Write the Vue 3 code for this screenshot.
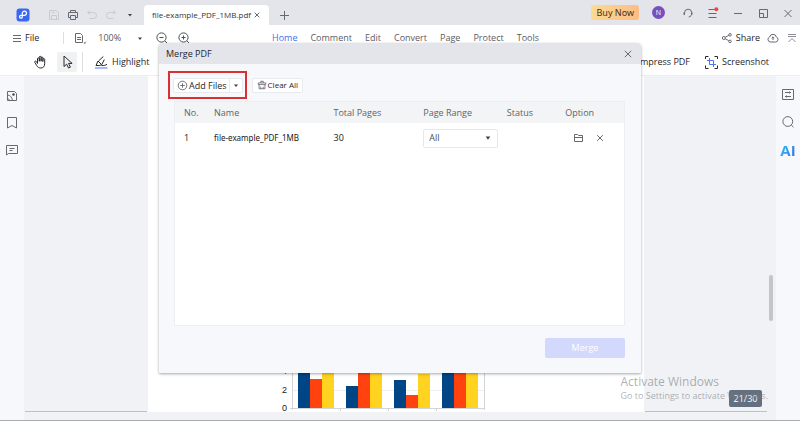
<script setup>
import { ref } from 'vue'

const menus = ['Home', 'Comment', 'Edit', 'Convert', 'Page', 'Protect', 'Tools']
const files = ref([{ name: 'file-example_PDF_1MB', pages: 30, range: 'All' }])
const zoom = ref('100%')
const bars = [
  [298, 366, 'a'], [310, 379, 'b'], [322, 366, 'c'],
  [346, 386, 'a'], [358, 366, 'b'], [370, 366, 'c'],
  [394, 380, 'a'], [406, 395, 'b'], [418, 374, 'c'],
  [442, 366, 'a'], [454, 366, 'b'], [466, 366, 'c'],
]
</script>

<template>
  <div class="app">
    <header class="titlebar">
      <svg class="logo" viewBox="0 0 14 14">
        <rect x="0.5" y="0.5" width="13" height="13" rx="3" fill="#3a66f2" stroke="none" />
        <path d="M6.300 8.900V5.300a2.100 2.100 0 1 1 2.100 2.100H4.900a1.400 1.400 0 1 0 1.400 1.500" fill="none" stroke="#fff" stroke-width="1.200" stroke-linecap="round" />
      </svg>
      <div class="quick">
        <button class="ic faint" aria-label="Save"><svg viewBox="0 0 12 12"><path d="M1.500 1.500h6.500l2.500 2.500v6.500h-9zM3.500 10.500v-4h5v4M3.500 3.500h3" /></svg></button>
        <button class="ic" aria-label="Print"><svg viewBox="0 0 12 12"><path d="M3.500 3.500v-2h5v2M3.500 8.500h-2v-5h9v5h-2M3.500 6.500h5v4h-5z" /></svg></button>
        <button class="ic faint" aria-label="Undo"><svg viewBox="0 0 12 12"><path d="M4 1.500l-2.500 2 2.500 2M1.500 3.500h6a3 3 0 0 1 0 6h-4" /></svg></button>
        <button class="ic faint" aria-label="Redo"><svg viewBox="0 0 12 12"><path d="M8 1.500l2.500 2-2.500 2M10.500 3.500h-6a3 3 0 0 0 0 6h4" /></svg></button>
        <button class="ic" aria-label="More"><svg viewBox="0 0 12 12"><path class="solid" d="M4 5h4l-2 2.500z" /></svg></button>
      </div>
      <div class="tab">
        <span>file-example_PDF_1MB.pdf</span>
        <button class="ic" aria-label="Close tab"><svg viewBox="0 0 12 12"><path d="M3.700 3.700l4.600 4.600M8.300 3.700l-4.600 4.600" /></svg></button>
      </div>
      <button class="ic plus" aria-label="New tab"><svg viewBox="0 0 12 12"><path d="M6.500 2v9M2 6.500h9" /></svg></button>
      <div class="winctl">
        <button class="buy">Buy Now</button>
        <span class="avatar">N</span>
        <div class="controls">
          <button class="ic" aria-label="Support"><svg viewBox="0 0 12 12"><path d="M2.500 7.800v-2a3.600 3.600 0 0 1 7.200 0c0 2.600-.8 3.700-3 4.200" /><path d="M2.200 5.500v2.300M9.800 5.500v2" stroke-width="1.500" /></svg></button>
          <button class="ic" aria-label="Menu"><svg viewBox="0 0 12 12"><path d="M1.500 2.500h6M1.500 6.500h8M1.500 10.500h8" /><circle cx="9.300" cy="2.300" r="2" fill="#f04444" stroke="none" /></svg></button>
          <button class="ic" aria-label="Minimise"><svg viewBox="0 0 12 12"><path d="M2 6.500h8" /></svg></button>
          <button class="ic" aria-label="Restore"><svg viewBox="0 0 12 12"><path d="M2.500 2.500h8v8h-8zM2.500 6.500h4v4" /></svg></button>
          <button class="ic" aria-label="Close"><svg viewBox="0 0 12 12"><path d="M2.500 3l7 7M9.500 3l-7 7" /></svg></button>
        </div>
      </div>
    </header>

    <div class="menubar">
      <div class="side">
        <button class="file">
          <svg viewBox="0 0 12 12"><path d="M3 3.500h8M3 6.500h8M3 9.500h8" /></svg>File
        </button>
        <i class="rule"></i>
        <button class="ic doc" aria-label="Page view"><svg viewBox="0 0 12 12"><path d="M1.500 1.500h5l2 2v7h-7zM3 5.500h4M3 7.500h4" /><path class="solid" d="M11.500 9.500v2h-2z" /></svg></button>
        <label class="zoom">
          <select v-model="zoom" aria-label="Zoom"><option>100%</option><option>150%</option></select>
          <svg viewBox="0 0 12 12"><path class="solid" d="M4 5.500h4l-2 2.500z" /></svg>
        </label>
        <button class="ic lens" aria-label="Zoom out"><svg viewBox="0 0 12 12"><circle cx="5.500" cy="5.500" r="4.600" /><path d="M3.500 5.500h4M9 9l2 2" /></svg></button>
        <button class="ic lens" aria-label="Zoom in"><svg viewBox="0 0 12 12"><circle cx="5.500" cy="5.500" r="4.600" /><path d="M3.500 5.500h4M5.500 3.500v4M9 9l2 2" /></svg></button>
      </div>
      <nav>
        <a v-for="(m, i) in menus" :key="m" href="#" :class="{ active: i === 0 }">{{ m }}</a>
      </nav>
      <div class="share">
        <button class="sharebtn">
          <svg viewBox="0 0 12 12"><circle cx="2.800" cy="6" r="1.500" /><circle cx="9" cy="2.800" r="1.300" /><circle cx="9" cy="9.400" r="1.300" /><path d="M4.200 5.300l3.600-1.900M4.200 6.700l3.600 2" /></svg>Share
        </button>
        <button class="ic" aria-label="Upload to cloud"><svg viewBox="0 0 12 12"><path d="M3.300 10a2.600 2.600 0 0 1-.7-5 3.500 3.500 0 0 1 6.800 0 2.600 2.600 0 0 1-.7 5zM6 8v-3M4.700 6.200l1.300-1.300 1.300 1.300" /></svg></button>
        <button class="ic soft" aria-label="Collapse"><svg viewBox="0 0 12 12"><path d="M2 2.500h8M2 4.500h8M2.500 10l3.500-3.500 3.500 3.500" /></svg></button>
      </div>
    </div>

    <div class="toolbar">
      <div class="tools">
        <button class="tool" aria-label="Hand"><svg viewBox="0 0 14 14"><path d="M4.500 8.500V3.700a.9.900 0 0 1 1.800 0v2.800M6.300 6V2.200a.9.900 0 0 1 1.800 0V6.500M8.100 6V2.900a.9.900 0 0 1 1.800 0v4M9.900 6V4.500a.9.900 0 0 1 1.800 0v4.200c0 2.700-1.400 4.300-3.900 4.300-1.900 0-3-.8-4-2.300l-2-3.200a.9.900 0 0 1 1.500-1l1.200 2" /></svg></button>
        <button class="tool on" aria-label="Select"><svg viewBox="0 0 14 14"><path d="M4 1v10.500l2.600-2.300 1.900 3.800 1.900-.9-1.900-3.700h3.600z" /></svg></button>
        <i class="rule"></i>
        <button class="labelled">
          <svg viewBox="0 0 14 14"><path d="M2 10.500l2-4.500 3.700 3.700-2.500.8h-3.200zM4.500 6l4.800-4.500M7.900 9.500l2.400-5M7.500 10.500c2.500.2 4.200-.3 5.500-1.200" /><path d="M1 13h12.500" stroke="#4a76f0" /></svg>Highlight
        </button>
      </div>
      <div class="tools end">
        <button class="labelled">Compress PDF</button>
        <button class="labelled">
          <svg viewBox="0 0 14 14"><path d="M1.500 4v-2.500h3M10.500 1.500h3v2.500M13.500 10.500v3h-3M4.500 13.500h-3v-3" /><path d="M5.500 3v6.500h6.500M3 5.500h6.500v6.500" stroke="#4a76f0" /></svg>Screenshot
        </button>
      </div>
    </div>

    <div class="work">
      <aside class="rail">
        <button class="ic" aria-label="Thumbnails"><svg viewBox="0 0 12 12"><path d="M1.500 1.500h7l2 2v7h-9zM1.500 5c2.800.3 4.500 2 5 5.500M1.500 8.500c1 .2 1.500.7 2 2" /><circle class="solid" cx="7.500" cy="4.500" r="1.200" /></svg></button>
        <button class="ic" aria-label="Bookmarks"><svg viewBox="0 0 12 12"><path d="M1.500 .5h9v10.500l-4.500-2.500-4.500 2.500z" /></svg></button>
        <button class="ic" aria-label="Comments"><svg viewBox="0 0 12 12"><path d="M.5 1.500h11v8h-9l-2 1.500zM3.500 4.500h5M3.500 6.500h3" /></svg></button>
      </aside>
      <main class="canvas">
        <div class="sheet blank"></div>
        <div class="sheet page">
          <svg class="chart" viewBox="282 364 204 48">
            <path d="M292 371.500H484M292 390.500H484" stroke="#eeeeee" />
            <path d="M292.500 364V410M484.500 364V410M290 408.500H484M340.500 408V411M388.500 408V411M436.500 408V411" stroke="#d4d4d4" />
            <rect v-for="(b, i) in bars" :key="i" :class="b[2]" :x="b[0]" :y="b[1]" width="12" :height="408 - b[1]" />
            <text x="287" y="374">4</text>
            <text x="287" y="393">2</text>
            <text x="287" y="411">0</text>
          </svg>
        </div>
        <div class="sheet blank"></div>
        <div class="track"><i></i></div>
      </main>
      <aside class="rail right">
        <button class="ic" aria-label="Properties"><svg viewBox="0 0 12 12"><path d="M.5 .5h11v10h-11zM3 3.500h6M3 7.500h6M7.500 2.500v2M4.500 6.500v2" /></svg></button>
        <button class="ic" aria-label="Search"><svg viewBox="0 0 12 12"><circle cx="5.800" cy="5.500" r="4.900" /><path d="M9.300 9l2.200 2.200" /></svg></button>
        <button class="ai">AI</button>
      </aside>
      <span class="counter">21/30</span>
      <div class="watermark"><p>Activate Windows</p><small>Go to Settings to activate Windows.</small></div>
    </div>

    <div class="overlay">
      <section class="dialog" role="dialog" aria-label="Merge PDF">
        <header>
          <h1>Merge PDF</h1>
          <button class="ic" aria-label="Close dialog"><svg viewBox="0 0 12 12"><path d="M2.800 2.800l6.400 6.400M9.200 2.800l-6.400 6.400" /></svg></button>
        </header>
        <div class="body">
          <div class="actions">
            <div class="marked">
              <div class="split">
                <button class="add"><svg viewBox="0 0 12 12"><circle cx="6" cy="6" r="4.700" /><path d="M3.500 6h5M6 3.500v5" /></svg>Add Files</button>
                <button class="drop" aria-label="More add options"><svg viewBox="0 0 12 12"><path class="solid" d="M4 5h4l-2 2.500z" /></svg></button>
              </div>
            </div>
            <button class="clear"><svg viewBox="0 0 12 12"><path d="M1.500 3.500h9v2h-9zM4.500 3.500v-2h3v2M2.500 5.500v5h7v-5M4.500 8v2.500M7.500 8v2.500" /></svg>Clear All</button>
          </div>
          <div class="list">
            <table>
              <colgroup><col class="c1" /><col class="c2" /><col class="c3" /><col class="c4" /><col class="c5" /><col /></colgroup>
              <thead>
                <tr><th>No.</th><th>Name</th><th>Total Pages</th><th>Page Range</th><th>Status</th><th>Option</th></tr>
              </thead>
              <tbody>
                <tr v-for="(f, i) in files" :key="f.name">
                  <td>{{ i + 1 }}</td>
                  <td class="name">{{ f.name }}</td>
                  <td>{{ f.pages }}</td>
                  <td>
                    <label class="range">
                      <select v-model="f.range" aria-label="Page range"><option>All</option><option>Custom</option></select>
                      <svg viewBox="0 0 12 12"><path class="solid" d="M3.700 4.500h4.600l-2.300 3.200z" /></svg>
                    </label>
                  </td>
                  <td></td>
                  <td>
                    <div class="opts">
                      <button class="ic" aria-label="Open folder"><svg viewBox="0 0 12 12"><path d="M2.500 9.500v-7h3l1 1h4v6zM2.500 5.500h8" /></svg></button>
                      <button class="ic" aria-label="Remove"><svg viewBox="0 0 12 12"><path d="M3.200 3.200l5.600 5.600M8.800 3.200l-5.600 5.600" /></svg></button>
                    </div>
                  </td>
                </tr>
              </tbody>
            </table>
          </div>
          <footer><button class="merge" disabled>Merge</button></footer>
        </div>
      </section>
    </div>
  </div>
</template>

<style>
body { margin: 0; }
</style>

<style scoped>
* { box-sizing: border-box; }
.app {
  position: relative;
  display: flex;
  flex-direction: column;
  min-height: 100vh;
  background: #fff;
  border-bottom: 1px solid #a9abad;
  font: 9px/12px "Open Sans", "Noto Sans", sans-serif;
  color: #24262b;
}
button, select {
  margin: 0;
  padding: 0;
  border: 0;
  background: none;
  font: inherit;
  color: inherit;
  white-space: nowrap;
}
select { appearance: none; }
svg {
  display: block;
  width: 12px;
  height: 12px;
  flex: none;
  fill: none;
  stroke: #666970;
  stroke-width: 1;
}
.solid { fill: #3e4148; stroke: none; }
.ic { display: grid; place-items: center; }
.rule { width: 1px; height: 12px; background: #dcdee2; }

.titlebar {
  display: flex;
  height: 25px;
  padding-left: 16px;
  background: #e4e5ea;
}
.logo { width: 14px; height: 14px; margin: 8px 14px 0 0; }
.quick { display: flex; height: 30px; }
.quick .ic { width: 19px; }
.faint svg { stroke: #c9cbd1; }
.tab {
  display: flex;
  align-items: center;
  justify-content: space-between;
  width: 125px;
  height: 20px;
  margin: 5px 8px 0 5px;
  padding: 0 6px 0 8px;
  border-radius: 4px 4px 0 0;
  background: #fff;
  font-size: 8px;
  color: #33353a;
}
.plus { width: 14px; height: 30px; }
.winctl { display: flex; align-items: center; margin-left: auto; }
.buy {
  height: 15px;
  padding: 0 5px;
  border-radius: 3px;
  background: linear-gradient(100deg, #fbdc94, #fdbb84);
  font-family: "Noto Sans", sans-serif;
  line-height: 15px;
  color: #4d3010;
}
.avatar {
  width: 13px;
  height: 13px;
  margin: 0 17px 0 13px;
  border-radius: 50%;
  background: #7650bd;
  color: #fff;
  font-size: 7px;
  line-height: 13px;
  text-align: center;
}
.controls { display: flex; gap: 13px; padding-right: 6px; }

.menubar { display: flex; align-items: center; justify-content: space-between; height: 26px; }
.side { display: flex; align-items: center; width: 272px; padding-left: 10px; }
.file { display: flex; align-items: center; gap: 3px; }
.side .rule { margin: 0 10px 0 24px; }
.doc { margin-right: 12px; }
.zoom { display: grid; grid-template-columns: 36px 12px; margin-right: 10px; color: #55585e; }
.lens { margin-right: 10px; }
.lens svg { stroke: #4e5158; }
nav { display: flex; flex: 1; gap: 13px; }
nav a { color: #5b5d63; text-decoration: none; }
nav a.active { color: #3f72ea; }
.share { display: flex; align-items: center; gap: 7px; padding-right: 2px; }
.sharebtn { display: flex; align-items: center; gap: 3px; }
.soft svg { stroke: #8b8e95; }

.toolbar {
  display: flex;
  justify-content: space-between;
  height: 25px;
  border-bottom: 1px solid #eceef1;
}
.tools { display: flex; align-items: center; gap: 7px; height: 22px; padding-left: 30px; }
.tools svg { width: 14px; height: 14px; stroke: #26282d; }
.tools .rule { height: 20px; margin-right: 4px; margin-left: -2px; }
.tool { display: grid; place-items: center; width: 20px; height: 20px; border-radius: 2px; }
.tool.on { background: #f0f1f3; }
.labelled { display: flex; align-items: center; gap: 4px; }
.end { gap: 14px; padding: 0 31px 0 0; }

.work { position: relative; display: flex; flex: 1; }
.rail {
  display: flex;
  flex-direction: column;
  align-items: center;
  gap: 15px;
  width: 24px;
  padding-top: 14px;
  background: #f6f8fb;
}
.rail .ic { height: 12px; }
.rail.right { padding-top: 13px; }
.ai {
  background: linear-gradient(120deg, #2fc3ee, #3a6cf0);
  background-clip: text;
  color: transparent;
  font: bold 15px/15px "Open Sans", sans-serif;
}
.canvas {
  display: grid;
  grid-template-columns: 1fr 4fr 1fr 8px;
  flex: 1;
  padding-bottom: 8px;
  background: #f0f2f5;
}
.blank { margin: 0 1px; border-bottom: 1px solid #bfc0c3; }
.page { display: flex; flex-direction: column; justify-content: flex-end; background: #fff; }
.chart { width: 204px; height: 48px; margin-left: 27%; }
.chart .a { fill: #004586; stroke: none; }
.chart .b { fill: #ff420e; stroke: none; }
.chart .c { fill: #ffd320; stroke: none; }
.chart text { font: 9px "Liberation Sans", sans-serif; fill: #222; stroke: none; text-anchor: end; }
.track { padding-top: 199px; }
.track i { display: block; width: 4px; height: 46px; margin-left: 1px; border-radius: 2px; background: #c3c5c9; }
.counter {
  position: absolute;
  right: 38px;
  bottom: 13px;
  width: 33px;
  border-radius: 2px;
  background: #647080;
  color: #fff;
  line-height: 17px;
  text-align: center;
}
.watermark { position: absolute; right: 32px; bottom: 18px; color: rgba(120, 124, 130, 0.6); }
.watermark p { margin: 0; font-size: 12px; line-height: 17px; }
.watermark small { display: block; font-size: 9px; line-height: 12px; }

.overlay { position: absolute; inset: 0; padding: 43px 159px 0; }
.dialog {
  overflow: hidden;
  border-radius: 4px 4px 1px 1px;
  background: #f6f8fb;
  box-shadow: 0 1px 3px rgba(0, 0, 0, 0.35);
}
.dialog > header {
  display: flex;
  align-items: center;
  justify-content: space-between;
  height: 21px;
  padding: 0 7px;
  background: #e4e5ea;
}
h1 { margin: 0; font-size: 9px; font-weight: 400; }
.body { padding: 7px 16px 15px 9px; }
.actions { display: flex; align-items: center; gap: 5px; }
.marked { padding: 5px 2px 4px 3px; border: 2px solid #dd2f2f; }
.split, .clear { display: flex; align-items: center; height: 15px; border: 1px solid #e8eaee; border-radius: 2px; background: #fff; }
.add { display: flex; align-items: center; gap: 1px; padding: 0 2px 0 3px; }
.add svg { width: 11px; height: 11px; }
.drop { height: 13px; border-left: 1px solid #e8eaee; }
.drop svg { height: 13px; }
.clear { gap: 1px; padding: 0 4px; font-size: 8px; }
.clear svg { width: 10px; height: 10px; }
.list { min-height: 225px; margin: 2px 0 12px 6px; border: 1px solid #eceef1; background: #fff; }
table { width: 100%; border-collapse: collapse; table-layout: fixed; }
.c1 { width: 8.7%; }
.c2 { width: 26.6%; }
.c3 { width: 20%; }
.c4 { width: 18.6%; }
.c5 { width: 13%; }
th, td { padding: 0; text-align: left; font-weight: 400; }
th { height: 21px; background: #f2f4f6; color: #606369; }
td { height: 30px; color: #17181b; }
.name { font-family: "Noto Sans", sans-serif; font-size: 8px; }
th:first-child, td:first-child { padding-left: 9px; }
.range {
  display: grid;
  grid-template-columns: 1fr 12px;
  align-items: center;
  width: 75px;
  height: 19px;
  padding: 0 3px 0 5px;
  border: 1px solid #e6e8ec;
  border-radius: 2px;
  color: #4e5158;
}
.opts { display: flex; gap: 10px; padding-left: 7px; }
footer { display: flex; justify-content: flex-end; }
.merge {
  width: 80px;
  height: 20px;
  border-radius: 2px;
  background: #d2d9fd;
  color: #fff;
  font-size: 9px;
}
</style>
